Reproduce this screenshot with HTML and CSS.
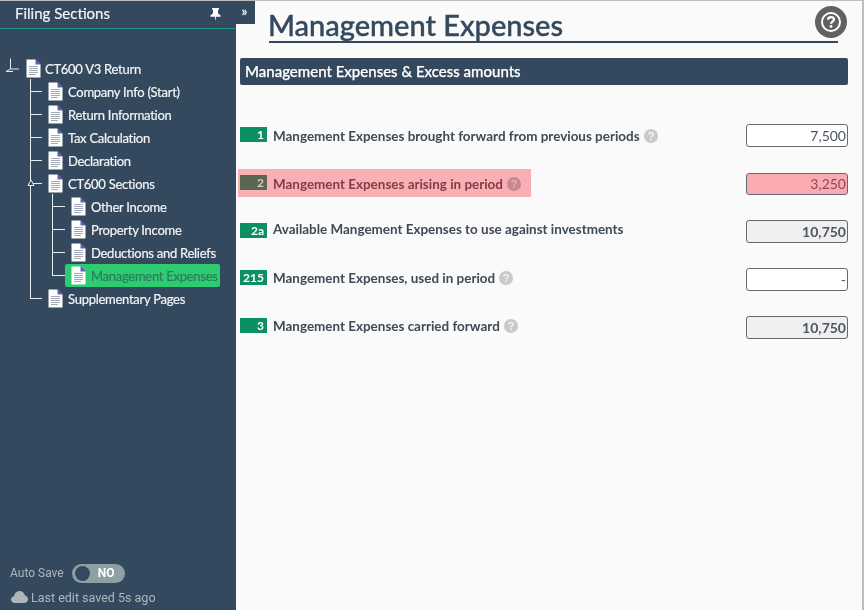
FILE: index.html
```html
<!DOCTYPE html>
<html lang="en">
<head>
<meta charset="utf-8">
<title>Management Expenses</title>
<link rel="stylesheet" href="styles.css">
</head>
<body>
<svg class="defs" width="0" height="0" aria-hidden="true">
  <symbol id="doc" viewBox="0 0 15 19">
    <path d="M0.5 0.5H9.5L14.5 5.5V18.5H0.5Z" fill="#fff"/>
    <path d="M9.5 0L15 5.500H9.500Z" fill="#5a60ad"/>
    <path d="M3 7.500H12M3 9.500H12M3 11.500H12M3 13.500H12M3 15.500H10" stroke="#a4a9b8" stroke-width="1" fill="none"/>
  </symbol>
  <symbol id="hint" viewBox="0 0 14 14">
    <circle cx="7" cy="7" r="7" fill="#c9c9c9"/>
    <path d="M4.9 5.5C4.9 4.2 5.8 3.5 7 3.5S9.1 4.2 9.1 5.4C9.1 6.8 7 6.9 7 8.3" fill="none" stroke="#f4f4f4" stroke-width="1.5"/>
    <circle cx="7" cy="10.3" r="0.95" fill="#f4f4f4"/>
  </symbol>
</svg>
<div class="page">
  <aside class="sidebar">
    <header class="side-head">
      <h2 class="side-title">Filing Sections</h2>
      <svg class="pin" width="11" height="13" viewBox="0 0 11 13"><path d="M2 0H9V1.400L8 2V5.200L10.600 7.600V8.800H6.100L5.500 13L4.900 8.800H0.400V7.600L3 5.200V2L2 1.400Z" fill="#fff"/></svg>
    </header>
    <span class="collapse-tab">»</span>
    <svg class="root-toggle" width="16" height="16" viewBox="0 0 16 16"><path d="M6.500 0.500V11M6.500 11L2 13.500M6.500 11H15M2 13.500H9" stroke="#e8edf0" stroke-width="1" fill="none"/></svg>
    <ul class="tree">
      <li class="node root">
        <div class="row"><svg class="doc"><use href="#doc"/></svg><span>CT600 V3 Return</span></div>
        <ul class="branch">
          <li class="node"><div class="row"><svg class="doc"><use href="#doc"/></svg><span>Company Info (Start)</span></div></li>
          <li class="node"><div class="row"><svg class="doc"><use href="#doc"/></svg><span>Return Information</span></div></li>
          <li class="node"><div class="row"><svg class="doc"><use href="#doc"/></svg><span>Tax Calculation</span></div></li>
          <li class="node"><div class="row"><svg class="doc"><use href="#doc"/></svg><span>Declaration</span></div></li>
          <li class="node open">
            <div class="row"><svg class="doc"><use href="#doc"/></svg><span>CT600 Sections</span></div>
            <svg class="sub-toggle" width="8" height="8" viewBox="0 0 8 8"><path d="M4 0.800L7 6.500H1Z" fill="#34495e" stroke="#e8edf0"/></svg>
            <ul class="branch">
              <li class="node"><div class="row"><svg class="doc"><use href="#doc"/></svg><span>Other Income</span></div></li>
              <li class="node"><div class="row"><svg class="doc"><use href="#doc"/></svg><span>Property Income</span></div></li>
              <li class="node"><div class="row"><svg class="doc"><use href="#doc"/></svg><span>Deductions and Reliefs</span></div></li>
              <li class="node"><div class="row active"><svg class="doc"><use href="#doc"/></svg><span>Management Expenses</span></div></li>
            </ul>
          </li>
          <li class="node"><div class="row"><svg class="doc"><use href="#doc"/></svg><span>Supplementary Pages</span></div></li>
        </ul>
      </li>
    </ul>
    <footer class="side-foot">
      <div class="autosave">
        <span>Auto Save</span>
        <span class="toggle"><i class="knob"></i><b>NO</b></span>
      </div>
      <div class="saved">
        <svg width="17" height="12" viewBox="0 0 17 12"><path d="M4 12C1.600 12 0 10.500 0 8.600C0 6.800 1.400 5.500 3 5.300C3.400 2.300 5.700 0 8.600 0C11.200 0 13.200 1.700 13.800 4.200C15.700 4.700 17 6.300 17 8.200C17 10.400 15.300 12 13 12Z" fill="#aeb6bc"/></svg>
        <span>Last edit saved 5s ago</span>
      </div>
    </footer>
  </aside>
  <main class="main">
    <div class="title-bar">
      <h1 class="title">Management Expenses</h1>
      <span class="help">
        <svg width="32" height="32" viewBox="0 0 32 32"><circle cx="16" cy="16" r="16" fill="#616161"/><circle cx="16" cy="16" r="9" fill="none" stroke="#fff" stroke-width="2"/><path d="M13 13.800C13 12 14.300 11.200 16 11.200S19 12.100 19 13.600C19 15.600 16 15.700 16 17.800" fill="none" stroke="#fff" stroke-width="2.200"/><circle cx="16" cy="20.400" r="1.400" fill="#fff"/></svg>
      </span>
    </div>
    <h2 class="section">Management Expenses &amp; Excess amounts</h2>
    <div class="form">
      <div class="field">
        <div class="label drop"><span class="badge">1</span><span class="text">Mangement Expenses brought forward from previous periods</span><svg class="hint"><use href="#hint"/></svg></div>
        <div class="input">7,500</div>
      </div>
      <div class="field error">
        <div class="label drop"><span class="badge">2</span><span class="text">Mangement Expenses arising in period</span><svg class="hint"><use href="#hint"/></svg></div>
        <div class="input">3,250</div>
      </div>
      <div class="field">
        <div class="label raised"><span class="badge">2a</span><span class="text">Available Mangement Expenses to use against investments</span></div>
        <div class="input calc">10,750</div>
      </div>
      <div class="field">
        <div class="label lifted"><span class="badge">215</span><span class="text">Mangement Expenses, used in period</span><svg class="hint"><use href="#hint"/></svg></div>
        <div class="input">-</div>
      </div>
      <div class="field">
        <div class="label lifted"><span class="badge">3</span><span class="text">Mangement Expenses carried forward</span><svg class="hint"><use href="#hint"/></svg></div>
        <div class="input calc">10,750</div>
      </div>
    </div>
  </main>
</div>
</body>
</html>
```
FILE: styles.css
```css
* { box-sizing: border-box; }
html, body { margin: 0; padding: 0; }
body { width: 864px; height: 610px; overflow: hidden; font-family: Lato, "Liberation Sans", sans-serif; background: #fafafa; }
.defs { position: absolute; }
.page { display: flex; height: 610px; border-top: 1px solid #bdbdbd; border-right: 2px solid #bdbdbd; }

.sidebar { position: relative; width: 236px; flex: none; display: flex; flex-direction: column; background: #34495e; color: #fff; }
.side-head { height: 28px; flex: none; display: flex; align-items: center; justify-content: space-between; padding: 0 15px 4px 15px; border-bottom: 1px solid #1f9a8a; }
.side-title { margin: 0; font-size: 15px; font-weight: 400; color: #f2f4f6; -webkit-text-stroke: 0.2px #f2f4f6; }
.pin { display: block; margin-top: 3px; }
.collapse-tab { position: absolute; left: 236px; top: 0; width: 19px; height: 23px; background: #34495e; color: #fff; font-size: 13px; font-weight: 700; line-height: 21px; padding-right: 2px; text-align: center; }
.root-toggle { position: absolute; left: 4px; top: 57px; }

.tree, .branch { list-style: none; margin: 0; padding: 0; }
.tree { padding: 28px 0 0 26px; }
.branch { position: relative; padding-left: 22px; }
.branch::before { content: ""; position: absolute; left: 4px; top: -1px; bottom: 11px; width: 1px; background: #e8edf0; }
.branch > .node { position: relative; }
.branch > .node::before { content: ""; position: absolute; left: -18px; top: 11px; width: 12px; height: 1px; background: #e8edf0; }
.sub-toggle { position: absolute; left: -21px; top: 7px; z-index: 1; }
.branch .branch { padding-left: 23px; }
.row { display: flex; align-items: center; gap: 5px; height: 23px; font-size: 13px; letter-spacing: -0.27px; color: #f2f4f6; white-space: nowrap; -webkit-text-stroke: 0.2px currentColor; }
.root > .row { height: 23px; gap: 4px; }
.doc { width: 15px; height: 19px; flex: none; display: block; }
.active { position: relative; width: 155px; margin-left: -6px; padding-left: 6px; border-radius: 2px; background: #2ecc71; color: #2b7a5e; }

.side-foot { margin-top: auto; padding: 0 0 5px 10px; font-family: Roboto, sans-serif; font-size: 12.5px; color: #aeb6bc; }
.autosave { display: flex; align-items: center; gap: 8px; height: 20px; font-size: 12px; }
.toggle { display: flex; align-items: center; width: 53px; height: 19px; padding: 0 2px 0 3px; border-radius: 10px; background: #8fa0a2; }
.knob { width: 15px; height: 15px; border-radius: 50%; background: #34495e; }
.toggle b { flex: 1; color: #fff; font-size: 12px; text-align: center; }
.saved { display: flex; align-items: center; gap: 3px; margin-top: 6px; margin-left: 1px; height: 16px; }

.main { flex: 1; min-width: 0; padding: 0 14px 0 4px; }
.title-bar { position: relative; height: 42px; margin: 0 10px 0 29px; border-bottom: 2px solid #34495e; }
.title { margin: 0 0 0 -1px; font-size: 29px; font-weight: 500; line-height: 47px; color: #34495e; white-space: nowrap; -webkit-text-stroke: 0.4px #34495e; }
.help { position: absolute; right: -9px; top: 5px; }
.help svg { display: block; }
.section { margin: 15px 0 0; height: 27px; padding-left: 5px; border-radius: 2px; background: #34495e; color: #fff; font-size: 15px; font-weight: 500; line-height: 26px; -webkit-text-stroke: 0.25px #fff; }

.form { display: flex; flex-direction: column; gap: 25px; margin-top: 39px; }
.field { display: flex; justify-content: space-between; align-items: flex-start; height: 23px; }
.label { display: flex; align-items: flex-start; height: 28px; margin: -3px 0 0 -2px; padding: 6px 10px 0 2px; font-size: 13.45px; font-weight: 700; color: #3f4a55; }
.badge { width: 27px; height: 15px; margin-right: 6px; padding-right: 3px; background: #0b8f63; color: #fff; font-size: 12px; font-weight: 700; line-height: 15px; text-align: right; }
.text { line-height: 14px; }
.drop .text, .drop .hint { margin-top: 2px; }
.raised .text { margin-top: -1px; }
.lifted { margin-top: -4px; }
.lifted .text, .lifted .hint { margin-top: 1px; }
.hint { width: 14px; height: 14px; margin-left: 4px; display: block; }
.input { width: 102px; height: 23px; padding-right: 1px; border: 1px solid #5f6b75; border-radius: 3px; background: #fff; color: #4c5660; font-size: 14px; line-height: 21px; text-align: right; }
.calc { background: #efefef; font-weight: 700; }
.error .label { background: #f8b0b5; color: #8a3a44; }
.error .badge { background: #5a6652; color: #d8c8c8; }
.error .hint { mix-blend-mode: multiply; }
.error .input { height: 22px; margin-top: 1px; line-height: 20px; background: #faaab0; color: #8a4a52; }
```
